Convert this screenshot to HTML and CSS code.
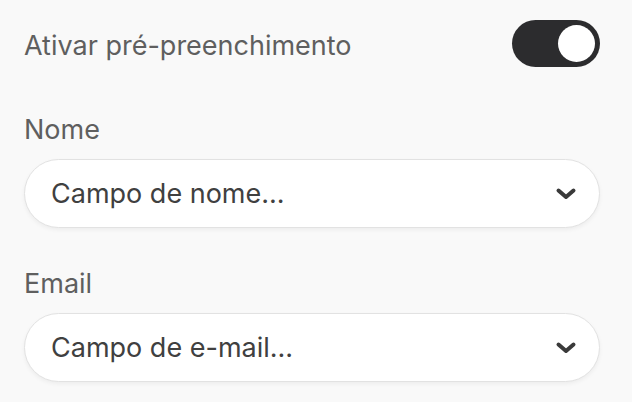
FILE: index.html
```html
<!DOCTYPE html>
<html lang="pt">
<head>
<meta charset="utf-8">
<link rel="stylesheet" href="styles.css">
</head>
<body>
<div class="panel">
  <div class="toggle-row">
    <span class="toggle-label">Ativar pré-preenchimento</span>
    <span class="switch"><span class="knob"></span></span>
  </div>
  <div class="field">
    <div class="field-label">Nome</div>
    <div class="select">
      <span class="select-text">Campo de nome...</span>
      <svg class="chev" width="22" height="14" viewBox="0 0 22 14"><path d="M3.5 3.5 L11 10 L18.5 3.5" fill="none" stroke="#3a3a3a" stroke-width="4" stroke-linecap="round" stroke-linejoin="round"/></svg>
    </div>
  </div>
  <div class="field">
    <div class="field-label">Email</div>
    <div class="select">
      <span class="select-text">Campo de e-mail...</span>
      <svg class="chev" width="22" height="14" viewBox="0 0 22 14"><path d="M3.5 3.5 L11 10 L18.5 3.5" fill="none" stroke="#3a3a3a" stroke-width="4" stroke-linecap="round" stroke-linejoin="round"/></svg>
    </div>
  </div>
</div>
</body>
</html>
```
FILE: styles.css
```css
html, body {
  margin: 0;
  padding: 0;
  background: #f9f9f9;
}
body {
  font-family: Inter, "Liberation Sans", sans-serif;
  width: 632px;
  height: 402px;
  overflow: hidden;
}
.panel {
  padding: 20px 32px 0 24px;
  display: flex;
  flex-direction: column;
}
.toggle-row {
  display: flex;
  justify-content: space-between;
  align-items: center;
  height: 47px;
}
.toggle-label {
  font-size: 27px;
  color: #5f5f5f;
  padding-top: 3px;
}
.switch {
  width: 88px;
  height: 47px;
  border-radius: 24px;
  background: #2c2c2e;
  display: flex;
  align-items: center;
  justify-content: flex-end;
  padding-right: 5px;
  box-sizing: border-box;
}
.knob {
  width: 37px;
  height: 37px;
  border-radius: 50%;
  background: #fff;
}
.field {
  display: flex;
  flex-direction: column;
  margin-top: 48px;
}
.field + .field {
  margin-top: 41px;
}
.field-label {
  font-size: 27px;
  color: #5f5f5f;
  line-height: 30px;
  margin-bottom: 14px;
}
.select {
  height: 69px;
  box-sizing: border-box;
  border: 1.5px solid #e2e2e2;
  border-radius: 35px;
  background: #fff;
  box-shadow: 0 2px 4px rgba(0,0,0,0.05);
  display: flex;
  align-items: center;
  justify-content: space-between;
  padding: 0 22px 0 26px;
}
.select-text {
  font-size: 27px;
  color: #404040;
}
.chev {
  display: block;
}
```
